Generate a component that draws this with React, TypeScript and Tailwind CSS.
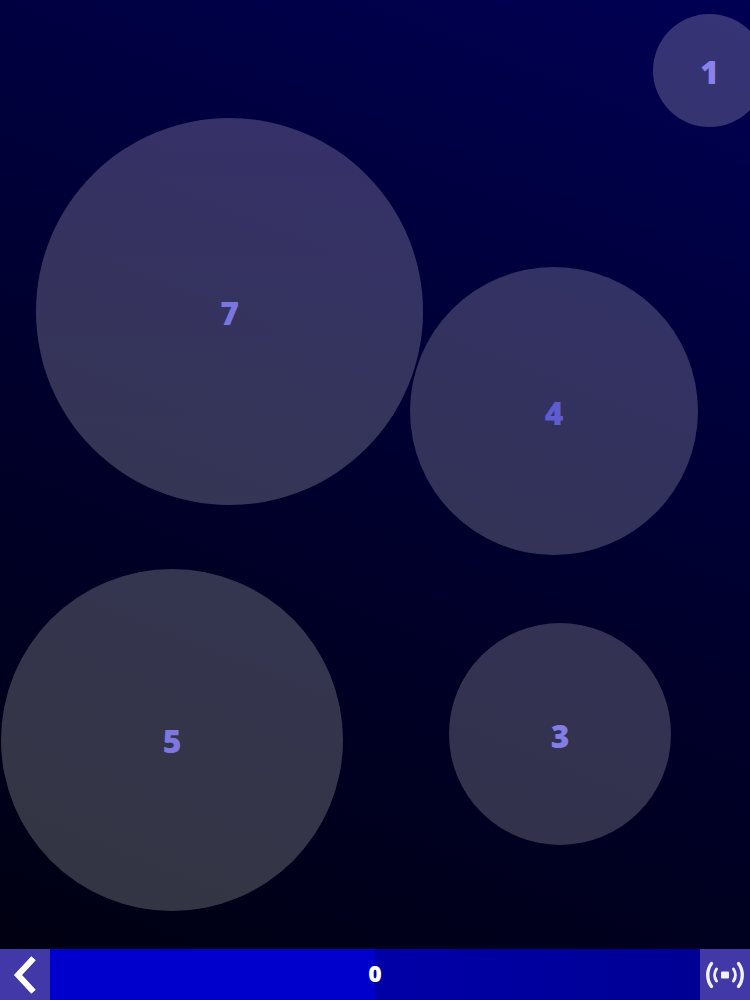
import React from 'react';

// bubbles sit on a free canvas, so their place is the content
const bubbles = [
  { n: 1, cls: 'left-[653px] top-[14px] w-[113px] h-[113px] bg-[#fff0ff]/[0.21] text-[#8a82ea] pt-[3px]' },
  { n: 7, cls: 'left-[36px] top-[118px] w-[387px] h-[387px] bg-gradient-to-b from-[#ffe8ff]/[0.21] to-[#f8fff8]/[0.21] text-[#7a76e0] pt-[3px]' },
  { n: 4, cls: 'left-[410px] top-[267px] w-[288px] h-[288px] bg-[#fff8ff]/[0.20] text-[#5f5cd0] pt-[3px]' },
  { n: 5, cls: 'left-[1px] top-[569px] w-[342px] h-[342px] bg-[#f4f8ec]/[0.21] text-[#7c78e0] pt-[2px]' },
  { n: 3, cls: 'left-[449px] top-[623px] w-[222px] h-[222px] bg-[#fff8f8]/[0.20] text-[#827ee4] pt-[3px]' },
];

function BackIcon() {
  return (
    <svg width="26" height="38" viewBox="0 0 26 38" fill="none" stroke="#ffffff" strokeWidth="6" strokeLinecap="square" strokeLinejoin="miter">
      <path d="M18.5 4.5 L5 19 L18.5 33.5" />
    </svg>
  );
}

function SignalIcon() {
  return (
    <svg width="38" height="28" viewBox="0 0 38 28" fill="none" stroke="#f0f0ff" strokeWidth="3.4" strokeLinecap="round">
      <path d="M5.5 2.5 C0.5 9 0.5 19 5.5 25.5" />
      <path d="M32.5 2.5 C37.5 9 37.5 19 32.5 25.5" />
      <path d="M10.5 8 C8 11.5 8 16.5 10.5 20" strokeWidth="3" />
      <path d="M27.5 8 C30 11.5 30 16.5 27.5 20" strokeWidth="3" />
      <rect x="15" y="10.5" width="8" height="7" rx="1" fill="#f0f0ff" stroke="none" />
    </svg>
  );
}

export default function App() {
  return (
    <div className="w-[750px] h-[1000px] flex flex-col overflow-hidden font-['Open_Sans',sans-serif]">
      <div className="relative flex-1 overflow-hidden bg-[linear-gradient(22deg,#000012_0%,#00002e_50%,#000054_100%)]">
        {bubbles.map((b) => (
          <div key={b.n} className={`absolute rounded-full flex items-center justify-center text-[32px] font-extrabold ${b.cls}`}>
            {b.n}
          </div>
        ))}
      </div>

      {/* bottom bar */}
      <div className="h-[51px] flex items-stretch">
        <button className="w-[50px] bg-[#4238a8] flex items-center justify-center pl-[2px]">
          <BackIcon />
        </button>
        <div className="relative flex-1 flex">
          <div className="flex-1 bg-[#0000cc]" />
          <div className="flex-1 bg-gradient-to-r from-[#0000a8] to-[#000094]" />
          <span className="absolute inset-0 flex items-center justify-center text-white text-[23px] font-extrabold pb-[2px]">0</span>
        </div>
        <button className="w-[50px] bg-[#4238a8] flex items-center justify-center">
          <SignalIcon />
        </button>
      </div>
    </div>
  );
}
